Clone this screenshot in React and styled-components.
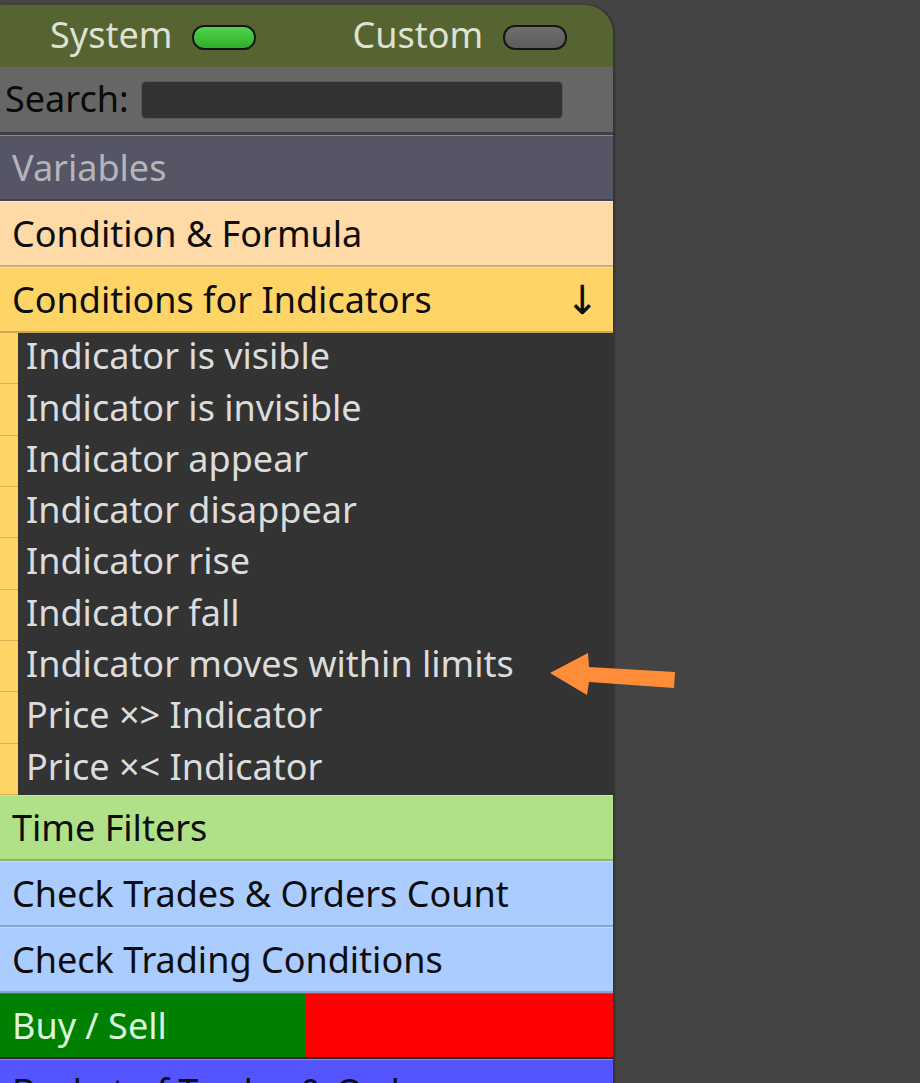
import React from 'react';
import styled, { createGlobalStyle } from 'styled-components';

const Global = createGlobalStyle`
  html, body {
    margin: 0;
    padding: 0;
    background: #444444;
    overflow: hidden;
  }
  body {
    font-family: 'Noto Sans', 'Open Sans', sans-serif;
  }
`;

const Page = styled.div`
  position: relative;
  height: 1083px;
  padding-top: 5px;
  box-sizing: border-box;
`;

const Panel = styled.div`
  width: 613px;
  background: #333333;
  box-shadow: 2px 0 2px rgba(0, 0, 0, 0.25);
  border-top-right-radius: 28px;
`;

const Header = styled.div`
  height: 62px;
  background: #566432;
  border-top-right-radius: 28px;
  display: grid;
  grid-template-columns: 1fr 1fr;
`;

const ToggleGroup = styled.div`
  display: flex;
  align-items: center;
  justify-content: center;
  gap: 20px;
  padding-bottom: 2px;
`;

const ToggleLabel = styled.span`
  color: #dfe2d3;
  font-size: 36px;
  line-height: 1;
`;

const Pill = styled.span`
  display: inline-block;
  width: 60px;
  height: 21px;
  border-radius: 12px;
  border: 2px solid #151515;
  background: ${p => (p.$on
    ? 'linear-gradient(#4fd44a, #2fae2d)'
    : 'linear-gradient(#6e6e6e, #5c5c5c)')};
  margin-top: 4px;
`;

const SearchBar = styled.div`
  height: 65px;
  background: #666666;
  display: flex;
  align-items: center;
  padding-left: 5px;
  gap: 12px;
  border-bottom: 3px solid #3f3f48;
`;

const SearchLabel = styled.span`
  color: #0a0a0a;
  font-size: 36px;
  line-height: 1;
  padding-bottom: 2px;
`;

const SearchInput = styled.div`
  width: 420px;
  height: 36px;
  background: #333333;
  border: 1px solid #5a5a5a;
  border-radius: 5px;
`;

const Row = styled.div`
  height: 66px;
  box-sizing: border-box;
  display: flex;
  align-items: center;
  justify-content: space-between;
  padding: 0 14px 0 12px;
  background: ${p => p.$bg};
  color: ${p => p.$fg || '#0d0d0d'};
  font-size: 36px;
  white-space: nowrap;
  overflow: hidden;
  border-top: 1px solid rgba(255, 255, 255, 0.3);
  border-bottom: 2px solid rgba(0, 0, 0, 0.2);
`;

const SplitRow = styled.div`
  height: 66px;
  box-sizing: border-box;
  display: grid;
  grid-template-columns: 306px 1fr;
  border-top: 1px solid rgba(255, 255, 255, 0.25);
  border-bottom: 2px solid rgba(0, 0, 0, 0.25);
`;

const Half = styled.div`
  background: ${p => p.$bg};
  color: #dcf5dc;
  font-size: 36px;
  display: flex;
  align-items: center;
  padding-left: 12px;
`;

const Arrow = styled.span`
  font-size: 40px;
  font-family: 'DejaVu Sans', sans-serif;
  line-height: 1;
`;

const ItemList = styled.div`
  display: flex;
  flex-direction: column;
`;

const Item = styled.div`
  height: 51.33px;
  display: flex;
`;

const Strip = styled.div`
  width: 18px;
  flex: none;
  background: #ffd466;
  border-bottom: 1px solid #d9b050;
  box-sizing: border-box;
`;

const ItemLabel = styled.div`
  flex: 1;
  display: flex;
  align-items: center;
  padding-left: 8px;
  padding-bottom: 6px;
  color: #dcdcdc;
  font-size: 36px;
  background: #333333;
`;

const Pointer = styled.svg`
  position: absolute;
  left: 540px;
  top: 645px;
`;

const items = [
  'Indicator is visible',
  'Indicator is invisible',
  'Indicator appear',
  'Indicator disappear',
  'Indicator rise',
  'Indicator fall',
  'Indicator moves within limits',
  'Price \u00d7> Indicator',
  'Price \u00d7< Indicator',
];

export default function App() {
  return (
    <Page>
      <Global />
      <Panel>
        <Header>
          <ToggleGroup>
            <ToggleLabel>System</ToggleLabel>
            <Pill $on />
          </ToggleGroup>
          <ToggleGroup>
            <ToggleLabel>Custom</ToggleLabel>
            <Pill />
          </ToggleGroup>
        </Header>
        <SearchBar>
          <SearchLabel>Search:</SearchLabel>
          <SearchInput />
        </SearchBar>
        <Row $bg="#555566" $fg="#b4b4bc">Variables</Row>
        <Row $bg="#ffdaa6">Condition &amp; Formula</Row>
        <Row $bg="#ffd466">
          Conditions for Indicators
          <Arrow>↓</Arrow>
        </Row>
        <ItemList>
          {items.map(t => (
            <Item key={t}>
              <Strip />
              <ItemLabel>{t}</ItemLabel>
            </Item>
          ))}
        </ItemList>
        <Row $bg="#b0e088">Time Filters</Row>
        <Row $bg="#aaccff">Check Trades &amp; Orders Count</Row>
        <Row $bg="#aaccff">Check Trading Conditions</Row>
        <SplitRow>
          <Half $bg="#008000">Buy / Sell</Half>
          <Half $bg="#ff0000" />
        </SplitRow>
        <Row $bg="#5555ff">Basket of Trades &amp; Orders</Row>
      </Panel>
      <Pointer width="140" height="60" viewBox="540 645 140 60">
        <polygon
          points="550,673 588,653 589,667 675,672 674,688 589,682 587,695"
          fill="#ff8c38"
        />
      </Pointer>
    </Page>
  );
}
